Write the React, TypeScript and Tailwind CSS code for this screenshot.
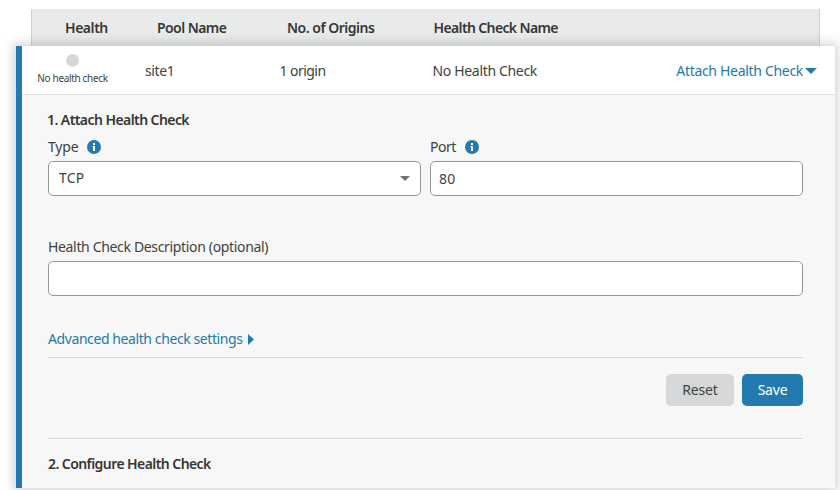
function Info() {
  return (
    <svg width="14" height="14" viewBox="0 0 14 14" className="shrink-0">
      <circle cx="7" cy="7" r="7" fill="#227aae" />
      <path d="M6 3h2v2H6zM5.6 6H8v5H6V7h-.4z" fill="#fff" />
    </svg>
  );
}

export default function App() {
  return (
    <div className="h-[490px] w-[840px] overflow-hidden bg-white pt-[9px] font-['Noto_Sans','Open_Sans',sans-serif] text-sm leading-5 whitespace-nowrap text-[#404242]">
      <div className="ml-[31px] flex h-[37px] w-[789px] items-center border-x border-[#cfd1d1] bg-[#e9ebea] pt-px pl-[33px] font-semibold text-[#363636]">
        <div className="w-[92px]"><span className="tracking-[-0.45px]">Health</span></div>
        <div className="w-[130px]"><span className="tracking-[-0.57px]">Pool Name</span></div>
        <div className="w-[146.5px]"><span className="tracking-[-0.5px]">No. of Origins</span></div>
        <div><span className="tracking-[-0.63px]">Health Check Name</span></div>
      </div>
      <div className="relative ml-4 h-[442px] w-[819px] border-l-[6px] border-[#227aae] bg-[#f7f7f7] shadow-[0_0_10px_3px_rgba(0,0,0,0.17)]">
        <div className="flex h-[49px] items-center border-b border-[#e0e0e0] bg-white pt-0.5">
          <div className="flex w-[101px] flex-col items-center pb-0.5">
            <div className="h-[13px] w-[13px] rounded-full bg-[#d5d7d8]" />
            <div className="mt-[3px] text-[10px] leading-[17px]"><span className="tracking-[-0.33px]">No health check</span></div>
          </div>
          <div className="ml-[22px] w-[134.5px]"><span className="tracking-[-0.35px]">site1</span></div>
          <div className="w-[153px]"><span className="tracking-[-0.55px]">1 origin</span></div>
          <div><span className="tracking-[-0.33px]">No Health Check</span></div>
          <div className="mr-[18px] ml-auto flex items-center gap-[2px] text-[#227aae]">
            <span className="tracking-[-0.31px]">Attach Health Check</span>
            <svg width="12" height="6"><path d="M0 0h12L6 6z" fill="currentColor" /></svg>
          </div>
        </div>
        <div className="pr-8 pl-[26px]">
          <h2 className="-ml-px pt-[15px] font-semibold text-[#363636]"><span className="tracking-[-0.57px]">1. Attach Health Check</span></h2>
          <div className="mt-[7px] flex gap-[9px]">
            <div className="w-[373px]">
              <div className="flex h-5 items-center gap-[9px]"><span className="tracking-[-0.2px]">Type</span><Info /></div>
              <div className="mt-1 flex h-[35px] items-center justify-between rounded-[5px] border border-[#92979b] bg-white pr-2.5 pl-2.5">
                <span className="-mt-px tracking-[0.15px]">TCP</span>
                <svg width="10" height="5"><path d="M0 0h10L5 5z" fill="#6d7276" /></svg>
              </div>
            </div>
            <div className="w-[373px]">
              <div className="flex h-5 items-center gap-[9px]"><span className="tracking-[-0.45px]">Port</span><Info /></div>
              <div className="mt-1 flex h-[35px] items-center rounded-[5px] border border-[#92979b] bg-white pt-px pl-2"><span className="tracking-[0.2px]">80</span></div>
            </div>
          </div>
          <div className="mt-[41px]"><span className="tracking-[-0.34px]">Health Check Description (optional)</span></div>
          <div className="mt-1 h-[35px] rounded-[5px] border border-[#92979b] bg-white" />
          <div className="mt-[33px] flex h-[29px] items-start gap-[5px] border-b border-[#d5d7d8] text-[#227aae]">
            <span className="tracking-[-0.41px]">Advanced health check settings</span>
            <svg width="6" height="11" className="mt-[5px]"><path d="M0 0v11L6 5.5z" fill="currentColor" /></svg>
          </div>
          <div className="flex h-[81px] justify-end gap-2 border-b border-[#d5d7d8] pt-4">
            <button className="flex h-8 w-[68px] items-center justify-center rounded-[5px] bg-[#d5d7d8]"><span className="tracking-[-0.2px]">Reset</span></button>
            <button className="flex h-8 w-[61px] items-center justify-center rounded-[5px] bg-[#227aae] text-white"><span className="tracking-[-0.2px]">Save</span></button>
          </div>
          <h2 className="pt-[15px] font-semibold text-[#363636]"><span className="tracking-[-0.57px]">2. Configure Health Check</span></h2>
        </div>
      </div>
    </div>
  );
}
